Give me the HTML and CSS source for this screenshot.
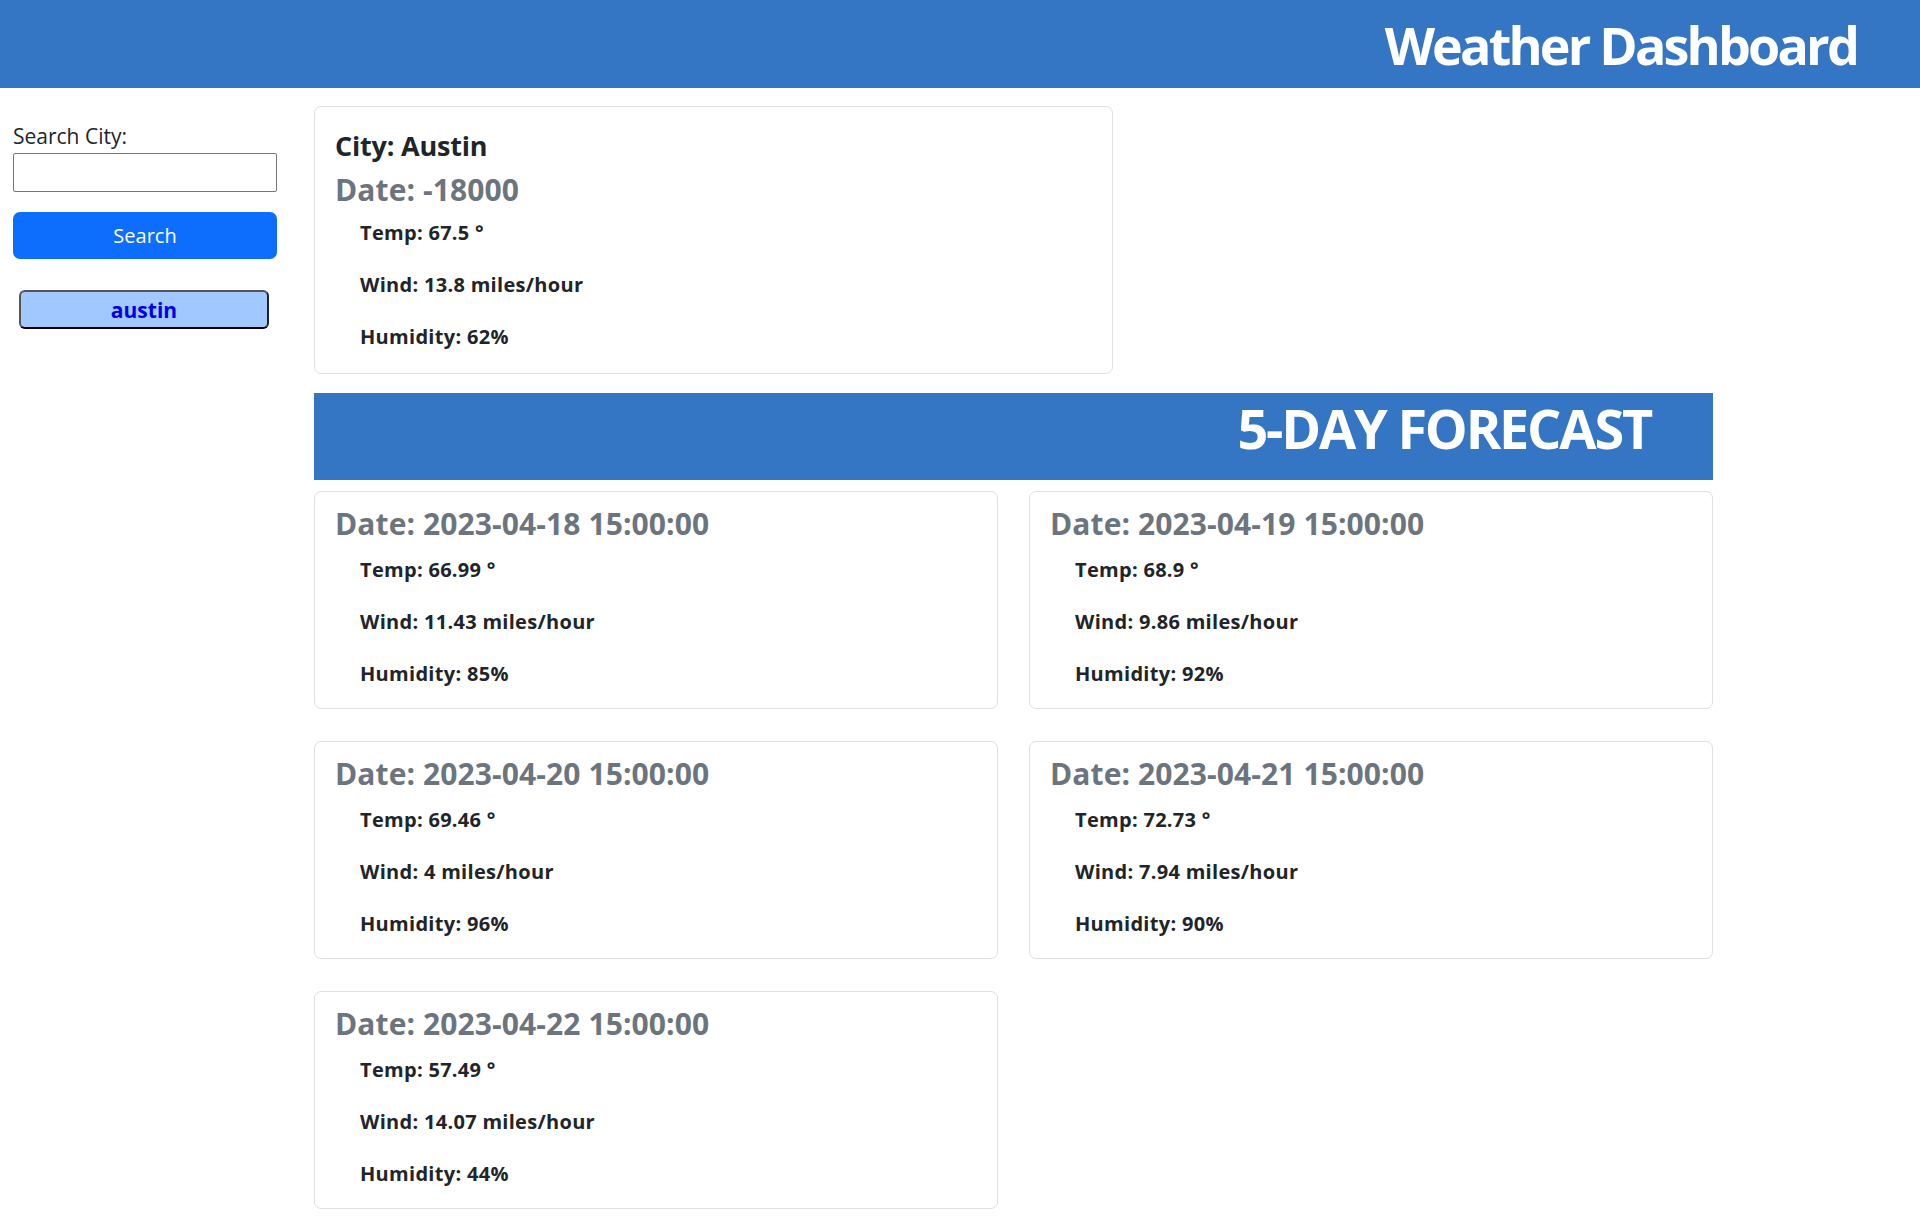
FILE: index.html
```html
<!DOCTYPE html>
<html lang="en">
<head>
<meta charset="utf-8">
<title>Weather Dashboard</title>
<link rel="stylesheet" href="styles.css">
</head>
<body>
<header class="topbar">
  <h1 class="topbar-title">Weather Dashboard</h1>
</header>
<div class="layout">
  <aside class="sidebar">
    <label class="search-label" for="city">Search City:</label>
    <input class="search-input" id="city" type="text">
    <button class="search-btn" type="button">Search</button>
    <button class="history-btn" type="button">austin</button>
  </aside>
  <main class="content">
    <section class="card current">
      <h5 class="city-title">City: Austin</h5>
      <h4 class="date-title">Date: -18000</h4>
      <p class="stat">Temp: 67.5 °</p>
      <p class="stat">Wind: 13.8 miles/hour</p>
      <p class="stat">Humidity: 62%</p>
    </section>
    <div class="forecast-banner">
      <h2 class="forecast-title">5-DAY FORECAST</h2>
    </div>
    <div class="forecast-grid">
      <section class="card day">
        <h4 class="date-title">Date: 2023-04-18 15:00:00</h4>
        <p class="stat">Temp: 66.99 °</p>
        <p class="stat">Wind: 11.43 miles/hour</p>
        <p class="stat">Humidity: 85%</p>
      </section>
      <section class="card day">
        <h4 class="date-title">Date: 2023-04-19 15:00:00</h4>
        <p class="stat">Temp: 68.9 °</p>
        <p class="stat">Wind: 9.86 miles/hour</p>
        <p class="stat">Humidity: 92%</p>
      </section>
      <section class="card day">
        <h4 class="date-title">Date: 2023-04-20 15:00:00</h4>
        <p class="stat">Temp: 69.46 °</p>
        <p class="stat">Wind: 4 miles/hour</p>
        <p class="stat">Humidity: 96%</p>
      </section>
      <section class="card day">
        <h4 class="date-title">Date: 2023-04-21 15:00:00</h4>
        <p class="stat">Temp: 72.73 °</p>
        <p class="stat">Wind: 7.94 miles/hour</p>
        <p class="stat">Humidity: 90%</p>
      </section>
      <section class="card day">
        <h4 class="date-title">Date: 2023-04-22 15:00:00</h4>
        <p class="stat">Temp: 57.49 °</p>
        <p class="stat">Wind: 14.07 miles/hour</p>
        <p class="stat">Humidity: 44%</p>
      </section>
    </div>
  </main>
</div>
</body>
</html>
```

FILE: styles.css
```css
* { box-sizing: border-box; }

body {
  margin: 0;
  font-family: "Open Sans", "Noto Sans", sans-serif;
  font-size: 20px;
  line-height: 30px;
  color: #212529;
  background: #fff;
}

.topbar {
  height: 88px;
  background: #3576c4;
  display: flex;
  align-items: flex-start;
  justify-content: flex-end;
  padding: 15px 63px 0 0;
}

.topbar-title {
  margin: 0;
  color: #fff;
  font-size: 52px;
  line-height: 60px;
  font-weight: 700;
  letter-spacing: -2.8px;
}

.layout {
  display: flex;
  align-items: flex-start;
}

.sidebar {
  width: 314px;
  flex: none;
  padding: 33px 37px 0 13px;
  display: flex;
  flex-direction: column;
}

.search-label {
  display: block;
  font-size: 21px;
  line-height: 30px;
  color: #212529;
  margin-bottom: 2px;
}

.search-input {
  display: block;
  width: 264px;
  height: 39px;
  border: 1px solid #767676;
  border-radius: 2px;
  font: inherit;
  padding: 0 6px;
  margin: 0 0 20px;
}

.search-btn {
  display: block;
  width: 264px;
  height: 47px;
  background: #0d6efd;
  color: #fff;
  border: none;
  border-radius: 7px;
  font-family: inherit;
  font-size: 20px;
  cursor: pointer;
  margin-bottom: 31px;
}

.history-btn {
  display: block;
  width: 250px;
  height: 39px;
  margin-left: 6px;
  background: #a2c9ff;
  color: #0000ee;
  border: 2px solid;
  border-color: #555 #222 #000 #555;
  border-radius: 6px;
  font-family: inherit;
  font-size: 21px;
  font-weight: 700;
  line-height: 30px;
  padding: 0;
}

.content {
  width: 1399px;
  flex: none;
  padding-top: 18px;
}

.card {
  border: 1px solid #dfdfdf;
  border-radius: 7px;
  background: #fff;
}

.current {
  width: 799px;
  padding: 22px 20px 21px;
}

.city-title {
  margin: 0 0 9px;
  font-size: 27px;
  line-height: 34px;
  font-weight: 700;
  color: #212529;
  letter-spacing: -0.2px;
}

.date-title {
  margin: 0 0 10px;
  font-size: 30px;
  line-height: 36px;
  font-weight: 700;
  color: #6c757d;
  letter-spacing: 0.1px;
}

.stat {
  margin: 0 0 22px 25px;
  font-size: 20px;
  line-height: 30px;
  font-weight: 700;
  letter-spacing: 0.3px;
}

.stat:last-child { margin-bottom: 0; }

.forecast-banner {
  margin-top: 19px;
  height: 87px;
  background: #3576c4;
  display: flex;
  align-items: flex-start;
  justify-content: flex-end;
  padding: 5px 62px 0 0;
}

.forecast-title {
  margin: 0;
  color: #fff;
  font-size: 54px;
  line-height: 60px;
  font-weight: 700;
  letter-spacing: -2.2px;
}

.forecast-grid {
  margin-top: 11px;
  display: grid;
  grid-template-columns: 684px 684px;
  column-gap: 31px;
  row-gap: 32px;
}

.day {
  height: 218px;
  padding: 14px 20px 20px;
}

.day .date-title {
  margin-bottom: 13px;
}
```
